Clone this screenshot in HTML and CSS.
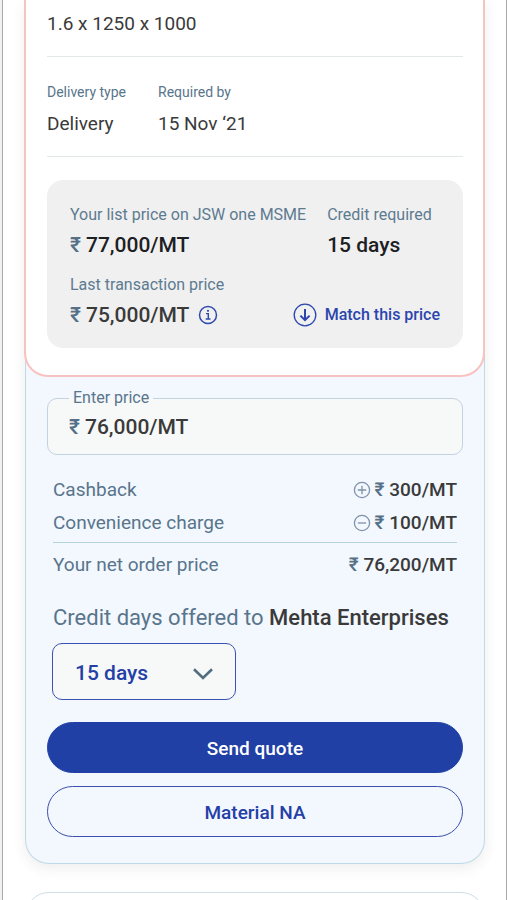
FILE: index.html
```html
<!DOCTYPE html>
<html lang="en">
<head>
<meta charset="utf-8">
<meta name="viewport" content="width=device-width, initial-scale=1">
<title>Quote request</title>
<link rel="stylesheet" href="styles.css">
</head>
<body>
<main class="screen">
  <article class="offer">
    <section class="details">
      <p class="size">1.6 x 1250 x 1000</p>
      <dl class="delivery">
        <div><dt>Delivery type</dt><dd>Delivery</dd></div>
        <div><dt>Required by</dt><dd>15 Nov ‘21</dd></div>
      </dl>
      <div class="prices">
        <div class="row">
          <div>
            <p class="label">Your list price on JSW one MSME</p>
            <p class="price strong"><span class="rupee">₹</span> 77,000/MT</p>
          </div>
          <div class="credit">
            <p class="label">Credit required</p>
            <p class="price strong">15 days</p>
          </div>
        </div>
        <div class="row">
          <div>
            <p class="label">Last transaction price</p>
            <p class="price"><span class="rupee">₹</span> 75,000/MT
              <button class="icon-button" type="button" aria-label="Price information">
                <svg width="20" height="20" viewBox="0 0 20 20" fill="none" stroke="currentColor"><circle cx="10" cy="10" r="8.5" stroke-width="1.5"/><path d="M8 8.6h2.3v5M7.7 14h4.8" stroke-width="1.4"/><circle cx="10" cy="5.8" r="1.1" fill="currentColor" stroke="none"/></svg>
              </button>
            </p>
          </div>
          <button class="match" type="button">
            <svg width="24" height="24" viewBox="0 0 24 24" fill="none" stroke="currentColor"><circle cx="12" cy="12" r="10.8" stroke-width="1.3"/><path d="M12 6v11M7.4 12.6 12 17.2l4.6-4.6" stroke-width="2"/></svg>
            Match this price
          </button>
        </div>
      </div>
    </section>
    <form class="quote">
      <fieldset class="field">
        <legend><label for="price">Enter price</label></legend>
        <div class="entry"><span class="rupee">₹</span><input id="price" type="text" value="76,000/MT"></div>
      </fieldset>
      <dl class="summary">
        <div><dt>Cashback</dt><dd>
          <svg width="18" height="18" viewBox="0 0 18 18" fill="none" stroke="currentColor" stroke-width="1.3"><circle cx="9" cy="9" r="7.6"/><path d="M9 4.8v8.4M4.8 9h8.4"/></svg>
          <span><span class="rupee">₹</span> 300/MT</span></dd></div>
        <div><dt>Convenience charge</dt><dd>
          <svg width="18" height="18" viewBox="0 0 18 18" fill="none" stroke="currentColor" stroke-width="1.3"><circle cx="9" cy="9" r="7.6"/><path d="M4.8 9h8.4"/></svg>
          <span><span class="rupee">₹</span> 100/MT</span></dd></div>
        <div class="net"><dt>Your net order price</dt><dd><span><span class="rupee">₹</span> 76,200/MT</span></dd></div>
      </dl>
      <label class="offered" for="days">Credit days offered to <strong>Mehta Enterprises</strong></label>
      <div class="select">
        <select id="days"><option>15 days</option></select>
        <svg width="22" height="14" viewBox="0 0 22 14" fill="none" stroke="currentColor" stroke-width="2.6"><path d="m2 2.2 9 8.8 9-8.8"/></svg>
      </div>
      <button class="action primary" type="button">Send quote</button>
      <button class="action" type="button">Material NA</button>
    </form>
  </article>
  <article class="next"></article>
</main>
</body>
</html>
```
FILE: styles.css
```css
* { box-sizing: border-box; }
html { background: #f1f1f1; }
body {
  margin: 0;
  font-family: Roboto, "Liberation Sans", sans-serif;
  font-size: 19px;
  line-height: 28px;
  color: #3a3a3a;
}
p, dl, dd { margin: 0; }
button, input, select { font: inherit; color: inherit; }
button { padding: 0; border: 0; background: none; cursor: pointer; }
svg { display: block; flex: none; }

.screen {
  height: 100vh;
  overflow: hidden;
  margin-left: 2px;
  padding: 0 21px;
  border: solid #a9a9a9;
  border-width: 0 1px;
  background: #fff;
}
.offer {
  margin: 0 0 0 1px;
  border: 1px solid #bfdae6;
  border-top: 0;
  border-radius: 0 0 24px 24px;
  background: #f3f7fe;
  box-shadow: 0 4px 14px rgba(70, 60, 60, 0.09);
}
.details {
  margin: 0 -1px 0 -2px;
  padding: 10px 20px 27px 21px;
  border: 2px solid #f8c2c0;
  border-top: 0;
  border-radius: 0 0 24px 24px;
  background: #fff;
}
.size { padding-bottom: 18px; border-bottom: 1px solid #e2e8ea; }
.delivery {
  display: flex;
  gap: 32px;
  padding: 25px 0 18px;
  border-bottom: 1px solid #e2e8ea;
}
.delivery dt { margin-bottom: 8px; font-size: 14px; line-height: 20px; color: #58758c; }
.prices {
  display: flex;
  flex-direction: column;
  gap: 16px;
  margin-top: 23px;
  padding: 25px 23px 19px;
  border-radius: 16px;
  background: #f0f0f0;
}
.row { display: flex; justify-content: space-between; gap: 21px; }
.credit { flex: 1; }
.label { margin-bottom: 6px; font-size: 16px; line-height: 20px; color: #5d7b90; }
.price { display: flex; align-items: center; gap: 5px; font-size: 21px; font-weight: 500; }
.strong { color: #1d2023; }
.rupee { color: #547188; }
.icon-button { margin-left: 4px; color: #2e49b1; }
.match {
  display: flex;
  align-items: center;
  align-self: end;
  gap: 8px;
  font-size: 16px;
  font-weight: 500;
  color: #2a45ae;
}
.quote {
  display: flex;
  flex-direction: column;
  padding: 11px 21px 26px;
}
.field {
  min-width: 0;
  margin: 0;
  padding: 5px 21px 13px;
  border: 1px solid #c3d2e1;
  border-radius: 10px;
  background: #f7f8f8;
}
.field legend { padding: 0 4px; font-size: 16px; line-height: 20px; color: #58758c; }
.entry { display: flex; gap: 5px; font-size: 21px; font-weight: 500; }
.entry input {
  flex: 1;
  min-width: 0;
  height: 28px;
  padding: 0;
  border: 0;
  outline: 0;
  background: none;
}
.summary { margin: 21px 6px 0; }
.summary > div { display: flex; justify-content: space-between; margin-bottom: 5px; }
.summary dt { color: #58758c; }
.summary dd { display: flex; align-items: center; gap: 4px; font-weight: 500; }
.summary svg { color: #7e92a9; }
.summary .net { margin: 0; padding-top: 8px; border-top: 1px solid #b4d3dc; }
.offered { margin: 25px 6px 11px; font-size: 22px; color: #58758c; }
.offered strong { font-weight: 500; color: #3a3a3a; }
.select {
  display: grid;
  align-items: center;
  width: 184px;
  margin: 0 0 22px 5px;
}
.select select {
  grid-area: 1 / 1;
  height: 57px;
  padding: 2px 22px 0;
  border: 1px solid #3a52b2;
  border-radius: 10px;
  appearance: none;
  background: #f7f8f8;
  font-size: 21px;
  font-weight: 500;
  color: #2440a6;
}
.select svg { grid-area: 1 / 1; justify-self: end; margin: 4px 22px 0 0; color: #526d7f; pointer-events: none; }
.action {
  height: 51px;
  padding-top: 2px;
  border: 1px solid #3a4fab;
  border-radius: 26px;
  font-weight: 500;
  color: #2440a6;
}
.primary { margin-bottom: 13px; border-color: #2040a5; background: #2040a5; color: #fff; }
.next {
  height: 120px;
  margin: 28px 0 0 1px;
  border: 1px solid #cfdee6;
  border-radius: 24px;
}
```
